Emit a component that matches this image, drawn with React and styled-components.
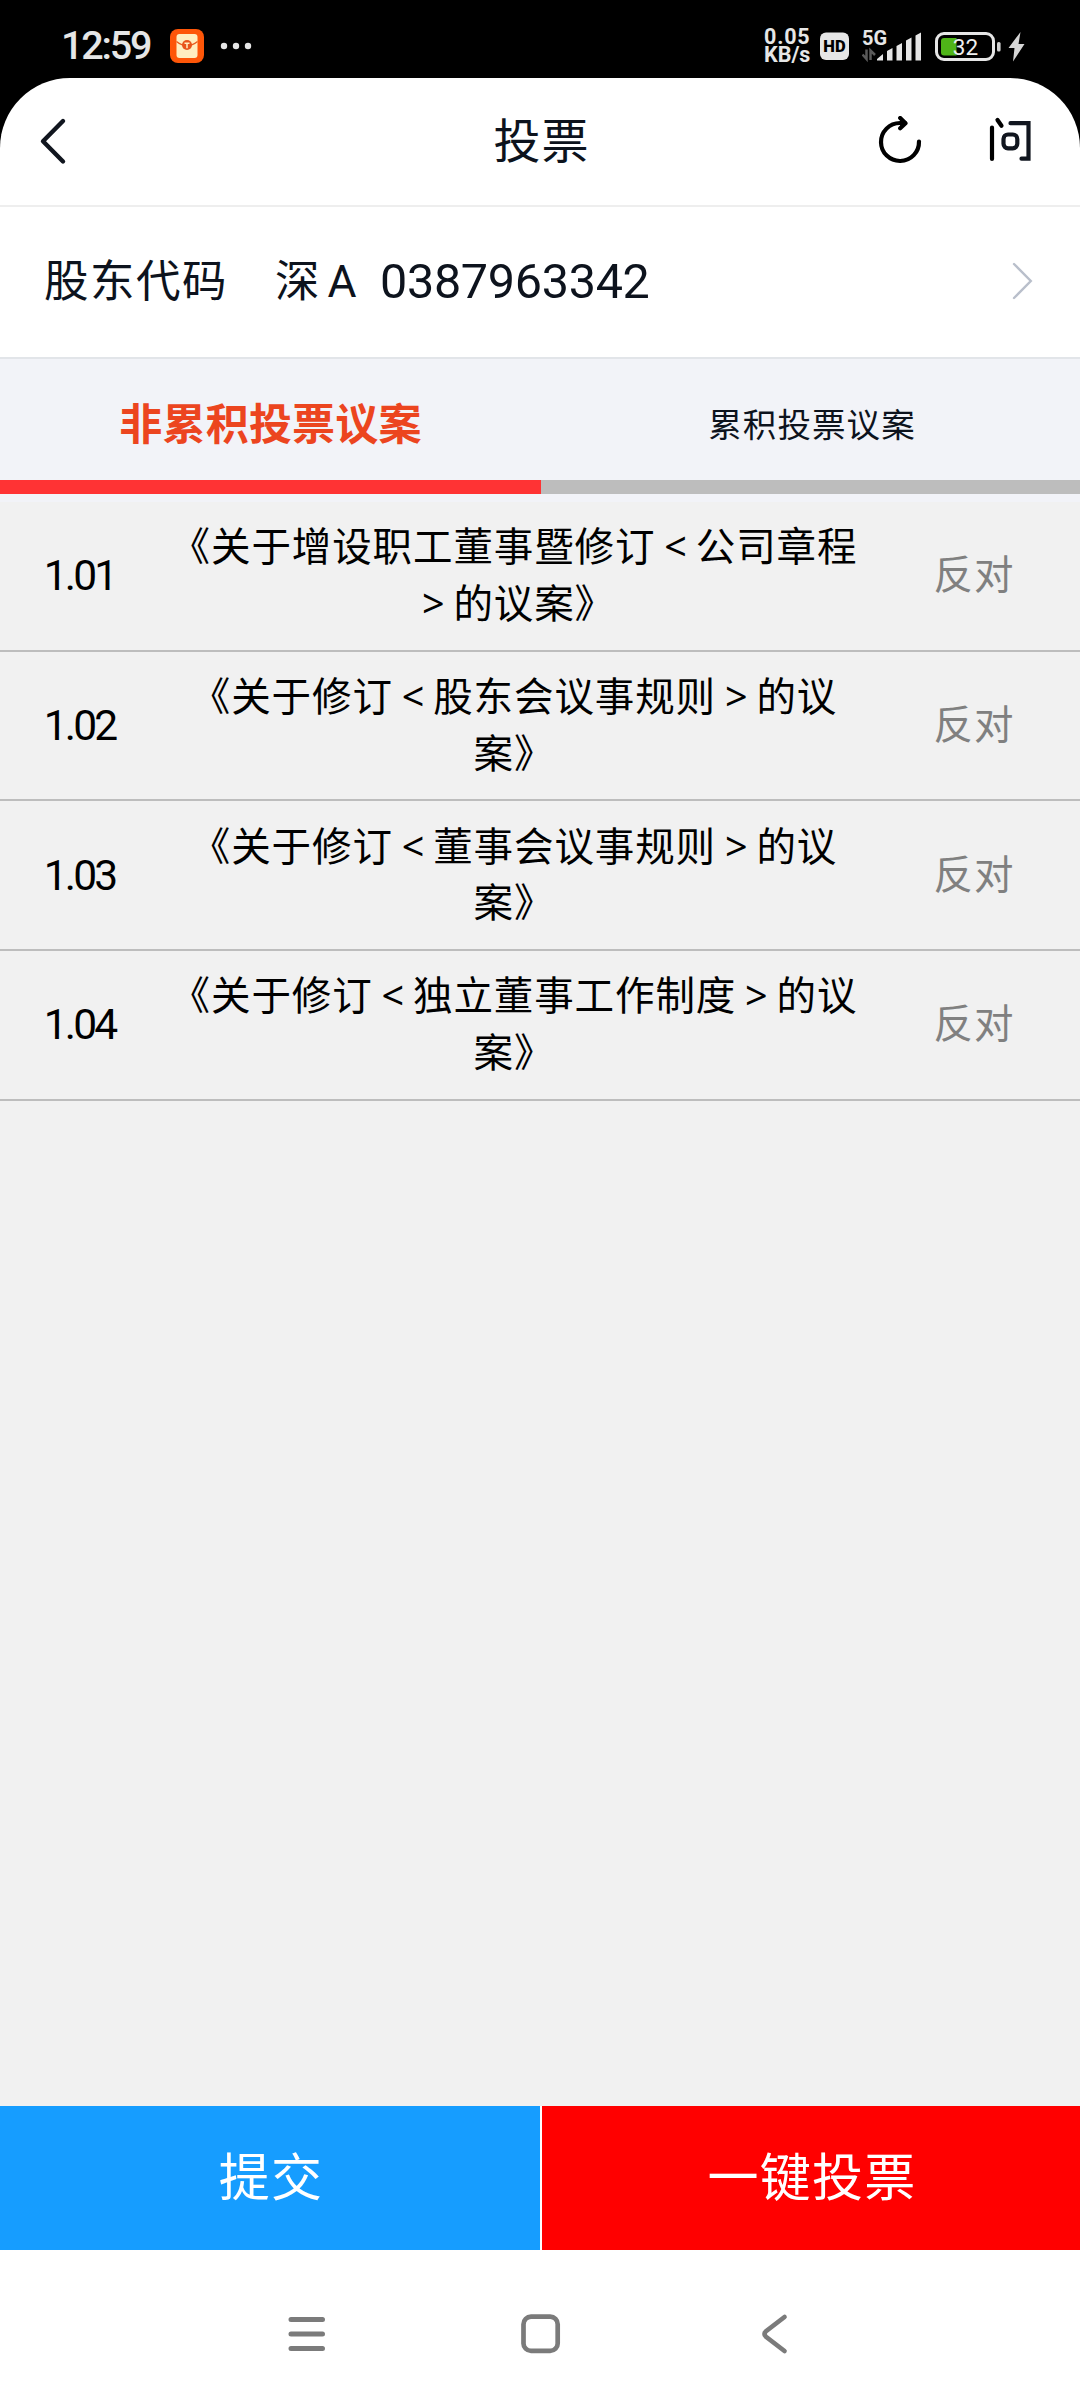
import React, { useState } from "react";
import styled, { createGlobalStyle } from "styled-components";

const GlobalStyle = createGlobalStyle`
  * {
    box-sizing: border-box;
  }
  body {
    margin: 0;
    background: #fff;
    font-family: Roboto, "Noto Sans CJK SC", sans-serif;
    text-spacing-trim: space-all;
  }
`;

const Screen = styled.div`
  width: 1080px;
  height: 2400px;
  display: flex;
  flex-direction: column;
  background: #000;
  overflow: hidden;
`;

const StatusBar = styled.div`
  height: 78px;
  flex: none;
  display: flex;
  justify-content: space-between;
  padding: 0 54px 0 61px;
  color: #e6e6e6;
`;

const StatusSide = styled.div`
  display: flex;
  align-items: center;
  height: 92px;
`;

const Clock = styled.span`
  width: 109px;
  font-size: 39.5px;
  font-weight: 500;
  line-height: 46px;
  letter-spacing: -2.2px;
`;

const Speed = styled.div`
  width: 56px;
  display: flex;
  flex-direction: column;
  font-size: 21.5px;
  font-weight: 700;
  line-height: 18.5px;
  white-space: nowrap;
`;

const SpeedValue = styled.span`
  letter-spacing: 0.8px;
`;

const Page = styled.div`
  flex: 1;
  display: flex;
  flex-direction: column;
  background: #fff;
  border-radius: 70px 70px 0 0;
  overflow: hidden;
`;

const Header = styled.div`
  height: 129px;
  flex: none;
  display: grid;
  grid-template-columns: 1fr 200px 1fr;
  align-items: center;
  padding: 0 46px 2px 38px;
  border-bottom: 2px solid #eee;
`;

const Title = styled.h1`
  margin: 0 -11px 0 0;
  padding-top: 2px;
  font-size: 47px;
  font-weight: 400;
  letter-spacing: 1px;
  line-height: 60px;
  text-align: center;
  color: #0d131d;
`;

const HeaderActions = styled.div`
  display: flex;
  justify-content: flex-end;
  gap: 64px;
  margin-right: 1px;
`;

const Account = styled.div`
  height: 152px;
  flex: none;
  display: flex;
  align-items: center;
  padding: 0 46px 2px 44px;
  border-bottom: 2px solid #e2e5e9;
  font-size: 44.5px;
  color: #0d131d;
`;

const AccountLabel = styled.span`
  width: 231px;
  padding-bottom: 8px;
  letter-spacing: 1.5px;
`;

const Market = styled.span`
  width: 105px;
  padding-bottom: 8px;
  word-spacing: -3px;
`;

const AccountNumber = styled.span`
  flex: 1;
  font-size: 48.5px;
  letter-spacing: -0.3px;
`;

const Tabs = styled.div`
  height: 143px;
  flex: none;
  display: flex;
  padding-bottom: 8px;
  background: #f2f3f8;
`;

const Tab = styled.div`
  width: ${(p) => (p.$active ? "541px" : "539px")};
  height: 135px;
  display: flex;
  align-items: center;
  justify-content: center;
  padding: ${(p) => (p.$active ? "3px 0 0" : "5px 0 0 3px")};
  border-bottom: 14px solid ${(p) => (p.$active ? "#ff3334" : "#bdbdbd")};
  color: ${(p) => (p.$active ? "#ec451f" : "#0d131d")};
  font-size: ${(p) => (p.$active ? "43px" : "33.5px")};
  font-weight: ${(p) => (p.$active ? 700 : 400)};
  letter-spacing: ${(p) => (p.$active ? "0.2px" : "1.1px")};
  cursor: pointer;
`;

const List = styled.div`
  flex: 1;
  background: #f1f1f1;
`;

const Row = styled.div`
  height: 149.7px;
  display: grid;
  grid-template-columns: 162px 706px 212px;
  align-items: center;
  border-bottom: 2.5px solid #bdbdbd;
`;

const Index = styled.span`
  font-size: 42.5px;
  letter-spacing: -2.8px;
  text-align: center;
  color: #000;
  padding-right: 3px;
`;

const Name = styled.div`
  font-size: 39.5px;
  letter-spacing: 0.9px;
  line-height: 56.5px;
  text-align: center;
  color: #000;
  padding: 2px 2px 0 0;
`;

const Line = styled.div`
  white-space: nowrap;
`;

const Angle = styled.span`
  display: inline-block;
  width: 40.4px;
  font-family: "Noto Sans", sans-serif;
  line-height: 1;
  letter-spacing: 0;
`;

const Choice = styled.span`
  font-size: 39.5px;
  letter-spacing: 0.9px;
  line-height: 56px;
  text-align: center;
  color: #808080;
  padding-top: 1px;
`;

const Buttons = styled.div`
  height: 144px;
  flex: none;
  display: flex;
  gap: 2px;
`;

const Button = styled.button`
  flex: ${(p) => (p.$primary ? "0 0 540px" : "1")};
  border: none;
  padding: 0 0 8px 2px;
  font-family: inherit;
  font-size: 51px;
  letter-spacing: 1.2px;
  color: #fff;
  background: ${(p) => (p.$primary ? "#169dff" : "#f00")};
  cursor: pointer;
`;

const NavBar = styled.div`
  height: 150px;
  flex: none;
  display: flex;
  align-items: center;
  justify-content: center;
  gap: 190px;
  padding: 18px 0 0 1px;
  color: #7b7b7b;
`;

const PacketIcon = () => (
  <svg width="34" height="34" viewBox="0 0 34 34">
    <rect width="34" height="34" rx="8" fill="#fe5608" />
    <rect x="6.5" y="5" width="21" height="24" rx="3" fill="#ffeec0" />
    <path d="M6.5 12.5Q17 21 27.5 12.5" fill="none" stroke="#e85a1c" strokeWidth="1.2" />
    <circle cx="17" cy="16" r="5" fill="#e8541a" />
    <path d="M14.5 14.2h5M17 14.2v5" stroke="#ffeec0" strokeWidth="1.5" />
  </svg>
);

const DotsIcon = () => (
  <svg width="50" height="34" viewBox="0 0 50 34" fill="#e6e6e6">
    <circle cx="20" cy="17" r="3.2" />
    <circle cx="32" cy="17" r="3.2" />
    <circle cx="44" cy="17" r="3.2" />
  </svg>
);

const HdIcon = () => (
  <svg width="42" height="34" viewBox="0 0 42 34">
    <rect x="0" y="3.5" width="29" height="27.5" rx="6" fill="#e6e6e6" />
    <text x="14.500" y="23.2" textAnchor="middle" fontFamily="Roboto" fontWeight="900" fontSize="16.5" fill="#000">
      HD
    </text>
  </svg>
);

const SignalIcon = () => (
  <svg width="73" height="40" viewBox="0 -3 73 40" fill="#e6e6e6">
    <text x="0" y="15.5" fontFamily="Roboto" fontWeight="700" fontSize="20">
      5G
    </text>
    <path d="M4.500 20.500v9.500l-4-4.500M8.500 31v-9.500l4.500 4.500" fill="none" stroke="#5a5a5a" strokeWidth="2.500" />
    <path d="M15 31.500v-1.500l6-5v6.500zM25 31.500v-9.500l5.500-3v12.500zM34.500 31.500v-14.500l5.500-3v17.500zM44 31.500v-20l5.500-3v23zM53.500 31.500v-25l5.500-3v28z" />
  </svg>
);

const BatteryIcon = () => (
  <svg width="91" height="34" viewBox="0 0 91 34">
    <rect x="1.500" y="4.500" width="57" height="26" rx="7.500" fill="none" stroke="#e6e6e6" strokeWidth="3" />
    <path d="M9 9h12.500v17.500H9q-3 0-3-3V12q0-3 3-3z" fill="#4fb518" />
    <rect x="62" y="13" width="3.600" height="9.500" rx="1.600" fill="#d0d0d0" />
    <text x="30.500" y="25.500" textAnchor="middle" fontFamily="Roboto" fontSize="22.500" fill="#f0f0f0">
      32
    </text>
    <path d="M85.500 3L73.500 19H79.500L78 32.500L89.500 15H83.500z" fill="#d6d6d6" />
  </svg>
);

const BackIcon = () => (
  <svg width="30" height="50" viewBox="0 0 30 50" fill="none">
    <path d="M25 5L5 25.200L25 45.500" stroke="#11161f" strokeWidth="4.400" strokeLinecap="round" strokeLinejoin="round" />
  </svg>
);

const RefreshIcon = () => (
  <svg width="46" height="50" viewBox="0 0 46 50" fill="none" stroke="#000" strokeWidth="4.200" strokeLinecap="round">
    <path d="M42 25.500A19 19 0 1 1 23 7H28" />
    <path d="M23.200 2L28.500 7.200L23.200 12.200" strokeLinejoin="round" fill="#000" />
  </svg>
);

const AskIcon = () => (
  <svg width="46" height="50" viewBox="0 0 46 50" fill="none" stroke="#11161f" strokeWidth="4.200" strokeLinecap="round">
    <path d="M5 11.500V43M10.500 4L14.500 9.700" stroke="#000" />
    <path d="M23.500 7.200H41.500V42.700H34.500" />
    <rect x="16.500" y="18.500" width="13.800" height="13.800" rx="4.500" />
  </svg>
);

const ArrowIcon = () => (
  <svg width="22" height="40" viewBox="0 0 22 40" fill="none">
    <path d="M2 3L18.800 20L2 37" stroke="#b9bfcb" strokeWidth="2.400" strokeLinecap="round" />
  </svg>
);

const MenuIcon = () => (
  <svg width="44" height="44" viewBox="0 0 44 44" stroke="currentColor" strokeWidth="5" strokeLinecap="round">
    <path d="M6 7.500H37.500M6 22H37.500M6 36.500H37.500" />
  </svg>
);

const HomeIcon = () => (
  <svg width="44" height="44" viewBox="0 0 44 44" fill="none">
    <rect x="4.500" y="4.700" width="34.200" height="34.200" rx="7.500" stroke="currentColor" strokeWidth="4.700" />
  </svg>
);

const NavBackIcon = () => (
  <svg width="44" height="44" viewBox="0 0 44 44" fill="none">
    <path d="M31.500 5L13 19.200Q10 22 13 24.800L31.500 39" stroke="currentColor" strokeWidth="4.700" strokeLinecap="round" />
  </svg>
);

const tabs = ["非累积投票议案", "累积投票议案"];

const proposals = [
  { id: "1.01", lines: ["《关于增设职工董事暨修订<公司章程", ">的议案》"] },
  { id: "1.02", lines: ["《关于修订<股东会议事规则>的议", "案》"] },
  { id: "1.03", lines: ["《关于修订<董事会议事规则>的议", "案》"] },
  { id: "1.04", lines: ["《关于修订<独立董事工作制度>的议", "案》"] },
];

// the angle brackets take one full-width cell each
const renderLine = (line) =>
  line.split(/([<>])/).map((part, i) =>
    part === "<" || part === ">" ? <Angle key={i}>{part}</Angle> : part
  );

const App = () => {
  const [active, setActive] = useState(0);

  return (
    <Screen>
      <GlobalStyle />
      <StatusBar>
        <StatusSide>
          <Clock>12:59</Clock>
          <PacketIcon />
          <DotsIcon />
        </StatusSide>
        <StatusSide>
          <Speed>
            <SpeedValue>0.05</SpeedValue>
            <span>KB/s</span>
          </Speed>
          <HdIcon />
          <SignalIcon />
          <BatteryIcon />
        </StatusSide>
      </StatusBar>
      <Page>
        <Header>
          <BackIcon />
          <Title>投票</Title>
          <HeaderActions>
            <RefreshIcon />
            <AskIcon />
          </HeaderActions>
        </Header>
        <Account>
          <AccountLabel>股东代码</AccountLabel>
          <Market>深 A</Market>
          <AccountNumber>0387963342</AccountNumber>
          <ArrowIcon />
        </Account>
        <Tabs>
          {tabs.map((tab, i) => (
            <Tab key={tab} $active={active === i} onClick={() => setActive(i)}>
              {tab}
            </Tab>
          ))}
        </Tabs>
        <List>
          {proposals.map((item) => (
            <Row key={item.id}>
              <Index>{item.id}</Index>
              <Name>
                {item.lines.map((line) => (
                  <Line key={line}>{renderLine(line)}</Line>
                ))}
              </Name>
              <Choice>反对</Choice>
            </Row>
          ))}
        </List>
        <Buttons>
          <Button $primary>提交</Button>
          <Button>一键投票</Button>
        </Buttons>
        <NavBar>
          <MenuIcon />
          <HomeIcon />
          <NavBackIcon />
        </NavBar>
      </Page>
    </Screen>
  );
};

export default App;
